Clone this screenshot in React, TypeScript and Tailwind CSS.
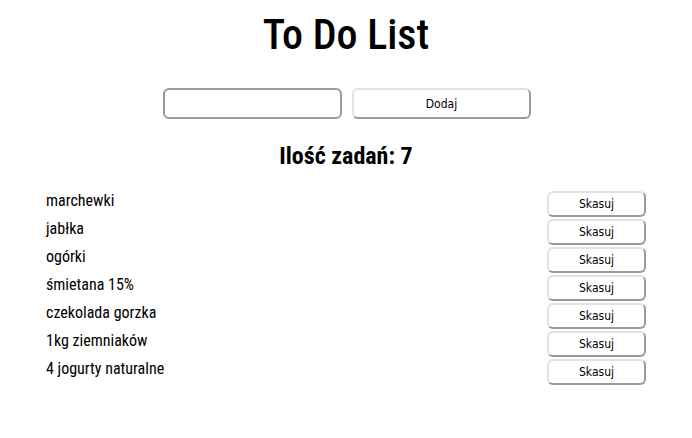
import React from "react";

const items = [
  "marchewki",
  "jabłka",
  "ogórki",
  "śmietana 15%",
  "czekolada gorzka",
  "1kg ziemniaków",
  "4 jogurty naturalne",
];

const btn =
  "bg-white rounded-[6px] border-2 border-t-[#e2e2e2] border-l-[#e2e2e2] border-r-[#9a9a9a] border-b-[#9a9a9a] text-[12px] text-black font-['DejaVu_Sans',sans-serif]";

export default function App() {
  return (
    <div className="w-[692px] h-[438px] bg-white font-['Roboto',sans-serif] font-stretch-condensed text-black flex flex-col items-center">
      <h1 className="mt-[11px] text-[42px] leading-[48px] font-medium">To Do List</h1>
      <div className="mt-[29px] flex gap-[10px] ml-[2px]">
        <input className="w-[179px] h-[31px] rounded-[6px] border-2 border-[#9a9a9a] bg-white outline-none" />
        <button className={`${btn} w-[179px] h-[31px]`}>Dodaj</button>
      </div>
      <h2 className="mt-[22px] text-[24px] leading-[30px] font-bold">Ilość zadań: {items.length}</h2>
      <ul className="mt-[20px] w-[600px] flex flex-col gap-[2px]">
        {items.map((it) => (
          <li key={it} className="flex justify-between items-start h-[26px]">
            <span className="text-[16px] leading-[18px] mt-[1px]">{it}</span>
            <button className={`${btn} w-[99px] h-[26px]`}>Skasuj</button>
          </li>
        ))}
      </ul>
    </div>
  );
}
